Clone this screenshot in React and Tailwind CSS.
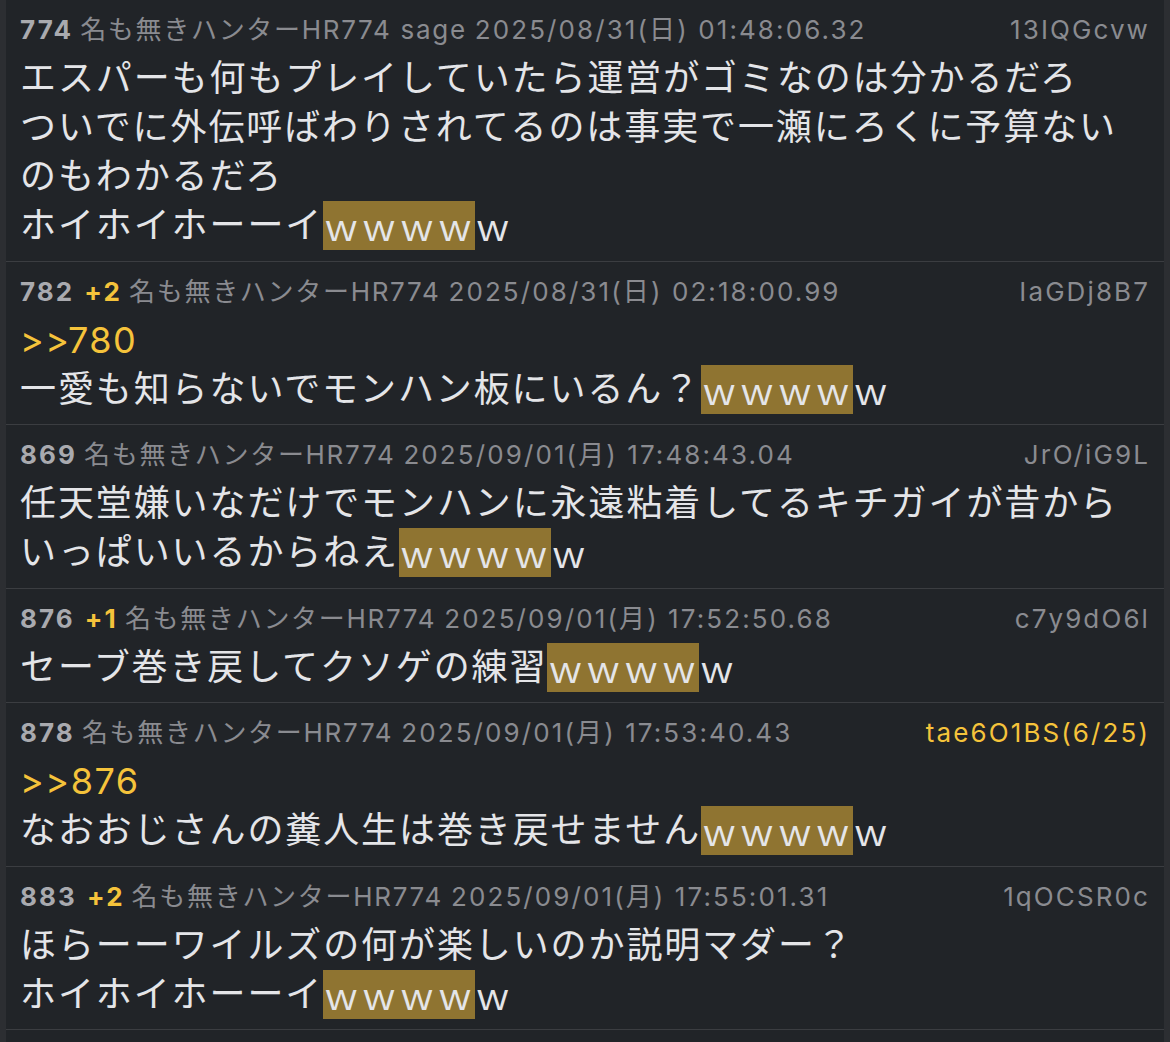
import React from "react";

const posts = [
  {
    no: "774",
    plus: null,
    name: "名も無きハンターHR774 sage",
    date: "2025/08/31(日) 01:48:06.32",
    id: "13IQGcvw",
    idYellow: false,
    anchor: null,
    lines: [
      "エスパーも何もプレイしていたら運営がゴミなのは分かるだろ",
      "ついでに外伝呼ばわりされてるのは事実で一瀬にろくに予算ない",
      "のもわかるだろ",
      { pre: "ホイホイホーーイ" },
    ],
  },
  {
    no: "782",
    plus: "+2",
    name: "名も無きハンターHR774",
    date: "2025/08/31(日) 02:18:00.99",
    id: "IaGDj8B7",
    idYellow: false,
    anchor: ">>780",
    lines: [{ pre: "一愛も知らないでモンハン板にいるん？" }],
  },
  {
    no: "869",
    plus: null,
    name: "名も無きハンターHR774",
    date: "2025/09/01(月) 17:48:43.04",
    id: "JrO/iG9L",
    idYellow: false,
    anchor: null,
    lines: [
      "任天堂嫌いなだけでモンハンに永遠粘着してるキチガイが昔から",
      { pre: "いっぱいいるからねえ" },
    ],
  },
  {
    no: "876",
    plus: "+1",
    name: "名も無きハンターHR774",
    date: "2025/09/01(月) 17:52:50.68",
    id: "c7y9dO6l",
    idYellow: false,
    anchor: null,
    lines: [{ pre: "セーブ巻き戻してクソゲの練習" }],
  },
  {
    no: "878",
    plus: null,
    name: "名も無きハンターHR774",
    date: "2025/09/01(月) 17:53:40.43",
    id: "tae6O1BS(6/25)",
    idYellow: true,
    anchor: ">>876",
    lines: [{ pre: "なおおじさんの糞人生は巻き戻せません" }],
  },
  {
    no: "883",
    plus: "+2",
    name: "名も無きハンターHR774",
    date: "2025/09/01(月) 17:55:01.31",
    id: "1qOCSR0c",
    idYellow: false,
    anchor: null,
    lines: [
      "ほらーーワイルズの何が楽しいのか説明マダー？",
      { pre: "ホイホイホーーイ" },
    ],
  },
];

const font = { fontFamily: '"Inter", "Noto Sans CJK JP", sans-serif' };
const cjk = { fontFamily: '"Noto Sans CJK JP", sans-serif' };

function Line({ line }) {
  if (typeof line === "string") {
    return <div className="h-[49px] leading-[49px] whitespace-nowrap">{line}</div>;
  }
  return (
    <div className="h-[49px] leading-[49px] whitespace-nowrap flex items-stretch">
      <span>{line.pre}</span>
      <span className="bg-[#8f7431]" style={cjk}>ｗｗｗｗ</span>
      <span style={cjk}>ｗ</span>
    </div>
  );
}

export default function App() {
  return (
    <div className="w-[1170px] h-[1042px] overflow-hidden bg-[#2a2c30] flex" style={font}>
      <div className="w-[6px] shrink-0 bg-[#2c2e32]" />
      <div className="flex-1 bg-[#212428]">
        {posts.map((p, i) => (
          <div key={i} className="border-b border-[#3b3d41] pt-[5px] pb-[10.5px] pl-[14px] pr-[14px]">
            <div className="h-[49px] flex items-center justify-between text-[26px] tracking-[2.1px] text-[#8a8b90] whitespace-nowrap">
              <div className="flex items-center">
                <span className="font-bold text-[#a9aaaf]">{p.no}</span>
                {p.plus && (
                  <span className="font-bold text-[#f5c33b] ml-[10px]">{p.plus}</span>
                )}
                <span className="ml-[7px] tracking-[1.7px]">{p.name}</span>
                <span className="ml-[8px]">{p.date}</span>
              </div>
              <span className={p.idYellow ? "text-[#f5c33b]" : "text-[#8a8b90]"}>{p.id}</span>
            </div>
            <div className="text-[36px] tracking-[1.9px] text-[#e4e5e8]">
              {p.anchor && (
                <div className="h-[49px] leading-[49px] text-[#f5c33b] tracking-[1.5px]">{p.anchor}</div>
              )}
              {p.lines.map((l, j) => (
                <Line key={j} line={l} />
              ))}
            </div>
          </div>
        ))}
      </div>
      <div className="w-[6px] shrink-0 bg-[#2c2e32]" />
    </div>
  );
}
